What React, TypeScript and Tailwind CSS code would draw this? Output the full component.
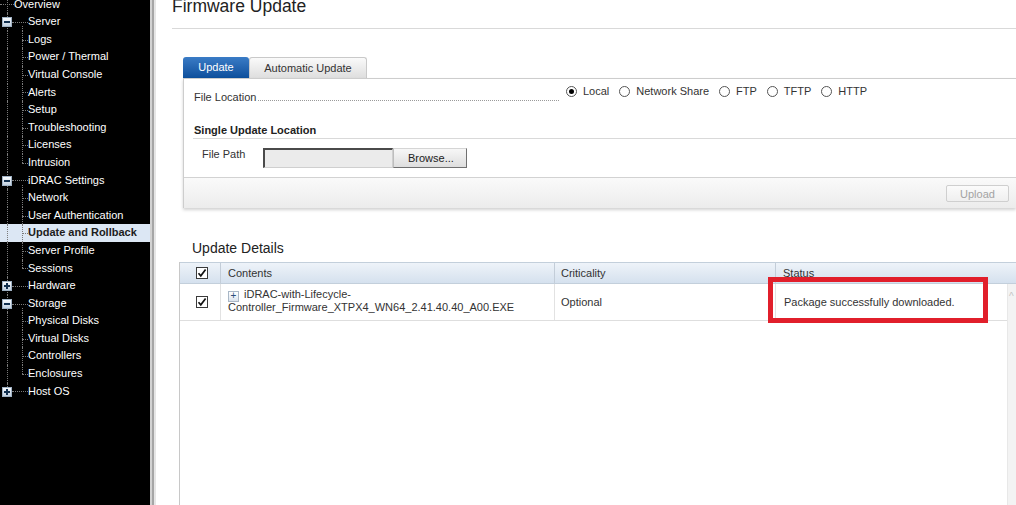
import React from 'react';

type TreeRow = {
  label: string;
  kind: 'top' | 'group' | 'leaf';
  box?: '+' | '-';
  last?: boolean;
  selected?: boolean;
};

const tree: TreeRow[] = [
  { label: 'Overview', kind: 'top' },
  { label: 'Server', kind: 'group', box: '-' },
  { label: 'Logs', kind: 'leaf' },
  { label: 'Power / Thermal', kind: 'leaf' },
  { label: 'Virtual Console', kind: 'leaf' },
  { label: 'Alerts', kind: 'leaf' },
  { label: 'Setup', kind: 'leaf' },
  { label: 'Troubleshooting', kind: 'leaf' },
  { label: 'Licenses', kind: 'leaf' },
  { label: 'Intrusion', kind: 'leaf', last: true },
  { label: 'iDRAC Settings', kind: 'group', box: '-' },
  { label: 'Network', kind: 'leaf' },
  { label: 'User Authentication', kind: 'leaf' },
  { label: 'Update and Rollback', kind: 'leaf', selected: true },
  { label: 'Server Profile', kind: 'leaf' },
  { label: 'Sessions', kind: 'leaf', last: true },
  { label: 'Hardware', kind: 'group', box: '+' },
  { label: 'Storage', kind: 'group', box: '-' },
  { label: 'Physical Disks', kind: 'leaf' },
  { label: 'Virtual Disks', kind: 'leaf' },
  { label: 'Controllers', kind: 'leaf' },
  { label: 'Enclosures', kind: 'leaf', last: true },
  { label: 'Host OS', kind: 'group', box: '+', last: true },
];

function ExpandBox({ type }: { type: '+' | '-' }) {
  return (
    <span className="absolute left-[2px] top-[4px] flex h-[10px] w-[10px] items-center justify-center border border-[#9fb1c4] bg-gradient-to-b from-[#f7fafd] to-[#c2d1e1]">
      <span className="relative block h-[2px] w-[6px] bg-[#12304f]">
        {type === '+' && <span className="absolute left-[2px] top-[-2px] block h-[6px] w-[2px] bg-[#12304f]" />}
      </span>
    </span>
  );
}

function Sidebar() {
  return (
    <aside className="w-[150px] shrink-0 bg-black text-[11px] text-white">
      <div className="-mt-[4.4px]">
        {tree.map((row) => (
          <div
            key={row.label}
            className={
              'relative h-[17.6px] leading-[17.6px] whitespace-nowrap ' +
              (row.selected ? 'bg-[#dce7f4] font-bold text-[#1c1c1c]' : '')
            }
          >
            {/* root vertical line */}
            <span
              className={
                'absolute left-[7px] top-0 border-l border-dotted border-[#7a7a7a] ' +
                (row.kind === 'group' && row.last ? 'h-1/2' : 'h-full')
              }
            />
            {row.kind === 'leaf' && (
              <>
                <span
                  className={
                    'absolute left-[22px] top-0 border-l border-dotted border-[#7a7a7a] ' +
                    (row.last ? 'h-1/2' : 'h-full')
                  }
                />
                <span className="absolute left-[22px] top-1/2 w-[6px] border-t border-dotted border-[#7a7a7a]" />
              </>
            )}
            {row.kind === 'group' && (
              <>
                {row.box === '-' && (
                  <span className="absolute left-[22px] top-[13px] h-[5px] border-l border-dotted border-[#7a7a7a]" />
                )}
                <span className="absolute left-[12px] top-1/2 w-[16px] border-t border-dotted border-[#7a7a7a]" />
                <ExpandBox type={row.box!} />
              </>
            )}
            {row.kind === 'top' && (
              <span className="absolute left-0 top-1/2 w-[14px] border-t border-dotted border-[#7a7a7a]" />
            )}
            <span className={'relative ' + (row.kind === 'top' ? 'pl-[14px]' : 'pl-[28px]')}>{row.label}</span>
          </div>
        ))}
      </div>
    </aside>
  );
}

function CheckBox() {
  return (
    <svg width="12" height="12" viewBox="0 0 12 12" className="block">
      <rect x="0.5" y="0.5" width="11" height="11" fill="#fff" stroke="#3a3a3a" />
      <path d="M2.5 6.2 L4.8 8.8 L9.6 2.6" fill="none" stroke="#111" strokeWidth="1.7" />
    </svg>
  );
}

function Radio({ checked }: { checked?: boolean }) {
  return (
    <span className="flex h-[11px] w-[11px] shrink-0 items-center justify-center rounded-full border border-[#555] bg-white">
      {checked && <span className="block h-[5px] w-[5px] rounded-full bg-black" />}
    </span>
  );
}

const locations = ['Local', 'Network Share', 'FTP', 'TFTP', 'HTTP'];

export default function App() {
  return (
    <div
      className="flex h-[505px] w-full overflow-hidden bg-white text-[#333]"
      style={{ fontFamily: '"Liberation Sans", Arial, sans-serif' }}
    >
      <Sidebar />
      {/* splitter */}
      <div className="flex w-[6px] shrink-0">
        <div className="w-[2px] bg-[#d2d2d2]" />
        <div className="w-[2px] bg-[#a6a6a6]" />
        <div className="w-[2px] bg-[#e6e6e6]" />
      </div>

      <main className="flex min-w-0 flex-1 flex-col pl-[16px]">
        <div className="-mt-[4px] h-[33px] shrink-0 border-b border-[#d9d9d9]">
          <h1 className="text-[17.5px] leading-[20px] font-normal text-[#222]">Firmware Update</h1>
        </div>

        {/* tabs */}
        <div className="ml-[11px] mt-[28px] flex h-[21px] shrink-0 text-[11px]">
          <div className="flex w-[66px] items-center justify-center rounded-t-[3px] bg-gradient-to-b from-[#3a7cc6] to-[#0c4f9c] text-white">
            Update
          </div>
          <div className="flex w-[118px] items-center justify-center rounded-t-[3px] border border-b-0 border-[#c9c9c9] bg-gradient-to-b from-[#fafafa] to-[#dedede] text-[#333]">
            Automatic Update
          </div>
        </div>

        {/* panel */}
        <section className="ml-[11px] shrink-0 border-l border-t border-[#cdcdcd] text-[11px] shadow-[0_2px_3px_rgba(0,0,0,0.18)]">
          <div className="flex items-start pl-[10px] pt-[6px]">
            <div className="mt-[6px] flex w-[365px] items-end">
              <span className="leading-[12px]">File Location</span>
              <span className="mb-[2px] ml-[2px] flex-1 border-b border-dotted border-[#9a9a9a]" />
            </div>
            <div className="ml-[7px] flex h-[12px] items-center leading-[12px]">
              {locations.map((loc, i) => (
                <div key={loc} className="mr-[10px] flex items-center">
                  <Radio checked={i === 0} />
                  <span className="ml-[6px]">{loc}</span>
                </div>
              ))}
            </div>
          </div>

          <div className="ml-[9px] mt-[21px] h-[15px] border-b border-[#d9d9d9] pl-[1px] font-bold leading-[13px] text-[#222]">
            Single Update Location
          </div>

          <div className="mt-[9px] flex h-[20px] pl-[18px]">
            <span className="w-[61px] leading-[12px]">File Path</span>
            <div className="h-[20px] w-[130px] border-l-2 border-t-2 border-b border-r border-[#4a4a4a] border-b-[#cfcfcf] border-r-[#cfcfcf] bg-[#ebebeb]" />
            <button className="h-[20px] w-[74px] border border-[#707070] border-l-[#bdbdbd] border-t-[#d5d5d5] bg-gradient-to-b from-[#f7f7f7] to-[#dedede] text-left pl-[14px] text-[11px] text-[#222]">
              Browse...
            </button>
          </div>

          <div className="mt-[9px] flex h-[31px] items-center justify-end border-t border-[#d2d2d2] bg-gradient-to-b from-[#fafafa] to-[#ececec] pr-[7px]">
            <button className="h-[17px] w-[63px] rounded-[2px] border border-[#cfcfcf] bg-gradient-to-b from-[#fbfbfb] to-[#efefef] text-[11px] text-[#a3a3a3]">
              Upload
            </button>
          </div>
        </section>

        <h2 className="ml-[20px] mt-[32px] shrink-0 text-[14px] leading-[16px] font-normal text-[#222]">
          Update Details
        </h2>

        {/* table */}
        <div className="relative ml-[7px] mt-[6px] flex flex-1 flex-col border-l border-[#c8c8c8] text-[11px]">
          <div className="flex h-[22px] shrink-0 border-y border-[#c3cfdb] bg-gradient-to-b from-[#eef3f9] to-[#d5e1ee] leading-[20px]">
            <div className="flex w-[41px] items-center justify-center border-r border-[#c3cdd8] pl-[4px]">
              <CheckBox />
            </div>
            <div className="w-[334px] border-r border-[#c3cdd8] pl-[7px]">Contents</div>
            <div className="w-[221px] border-r border-[#c3cdd8] pl-[6px]">Criticality</div>
            <div className="flex-1 pl-[7px]">Status</div>
          </div>

          <div className="flex flex-1">
            <div className="flex-1">
              <div className="flex h-[37px] border-b border-[#dedede]">
                <div className="flex w-[41px] items-center justify-center border-r border-[#e2e2e2] pl-[4px]">
                  <CheckBox />
                </div>
                <div className="w-[334px] border-r border-[#e2e2e2] pl-[7px] pt-[4px] leading-[13px]">
                  <span className="mr-[5px] inline-flex h-[11px] w-[11px] translate-y-[1px] items-center justify-center border border-[#a9b7c6] bg-gradient-to-b from-white to-[#dbe4ee] text-[10px] leading-none text-[#2b4f7a]">
                    +
                  </span>
                  iDRAC-with-Lifecycle-
                  <br />
                  Controller_Firmware_XTPX4_WN64_2.41.40.40_A00.EXE
                </div>
                <div className="flex w-[221px] items-center border-r border-[#e2e2e2] pl-[6px]">Optional</div>
                <div className="flex flex-1 items-center pl-[8px]">Package successfully downloaded.</div>
              </div>
            </div>
            <div className="relative w-[9px] border-l border-[#e8e8e8] bg-[#f3f3f3]">
              <span className="absolute left-[1px] top-[8px] text-[10px] leading-none text-[#c4c4c4]">^</span>
            </div>
          </div>

          {/* highlight annotation */}
          <div className="pointer-events-none absolute left-[588px] top-[15px] h-[46px] w-[220px] border-[5px] border-[#e11f2b]" />
        </div>
      </main>
    </div>
  );
}
